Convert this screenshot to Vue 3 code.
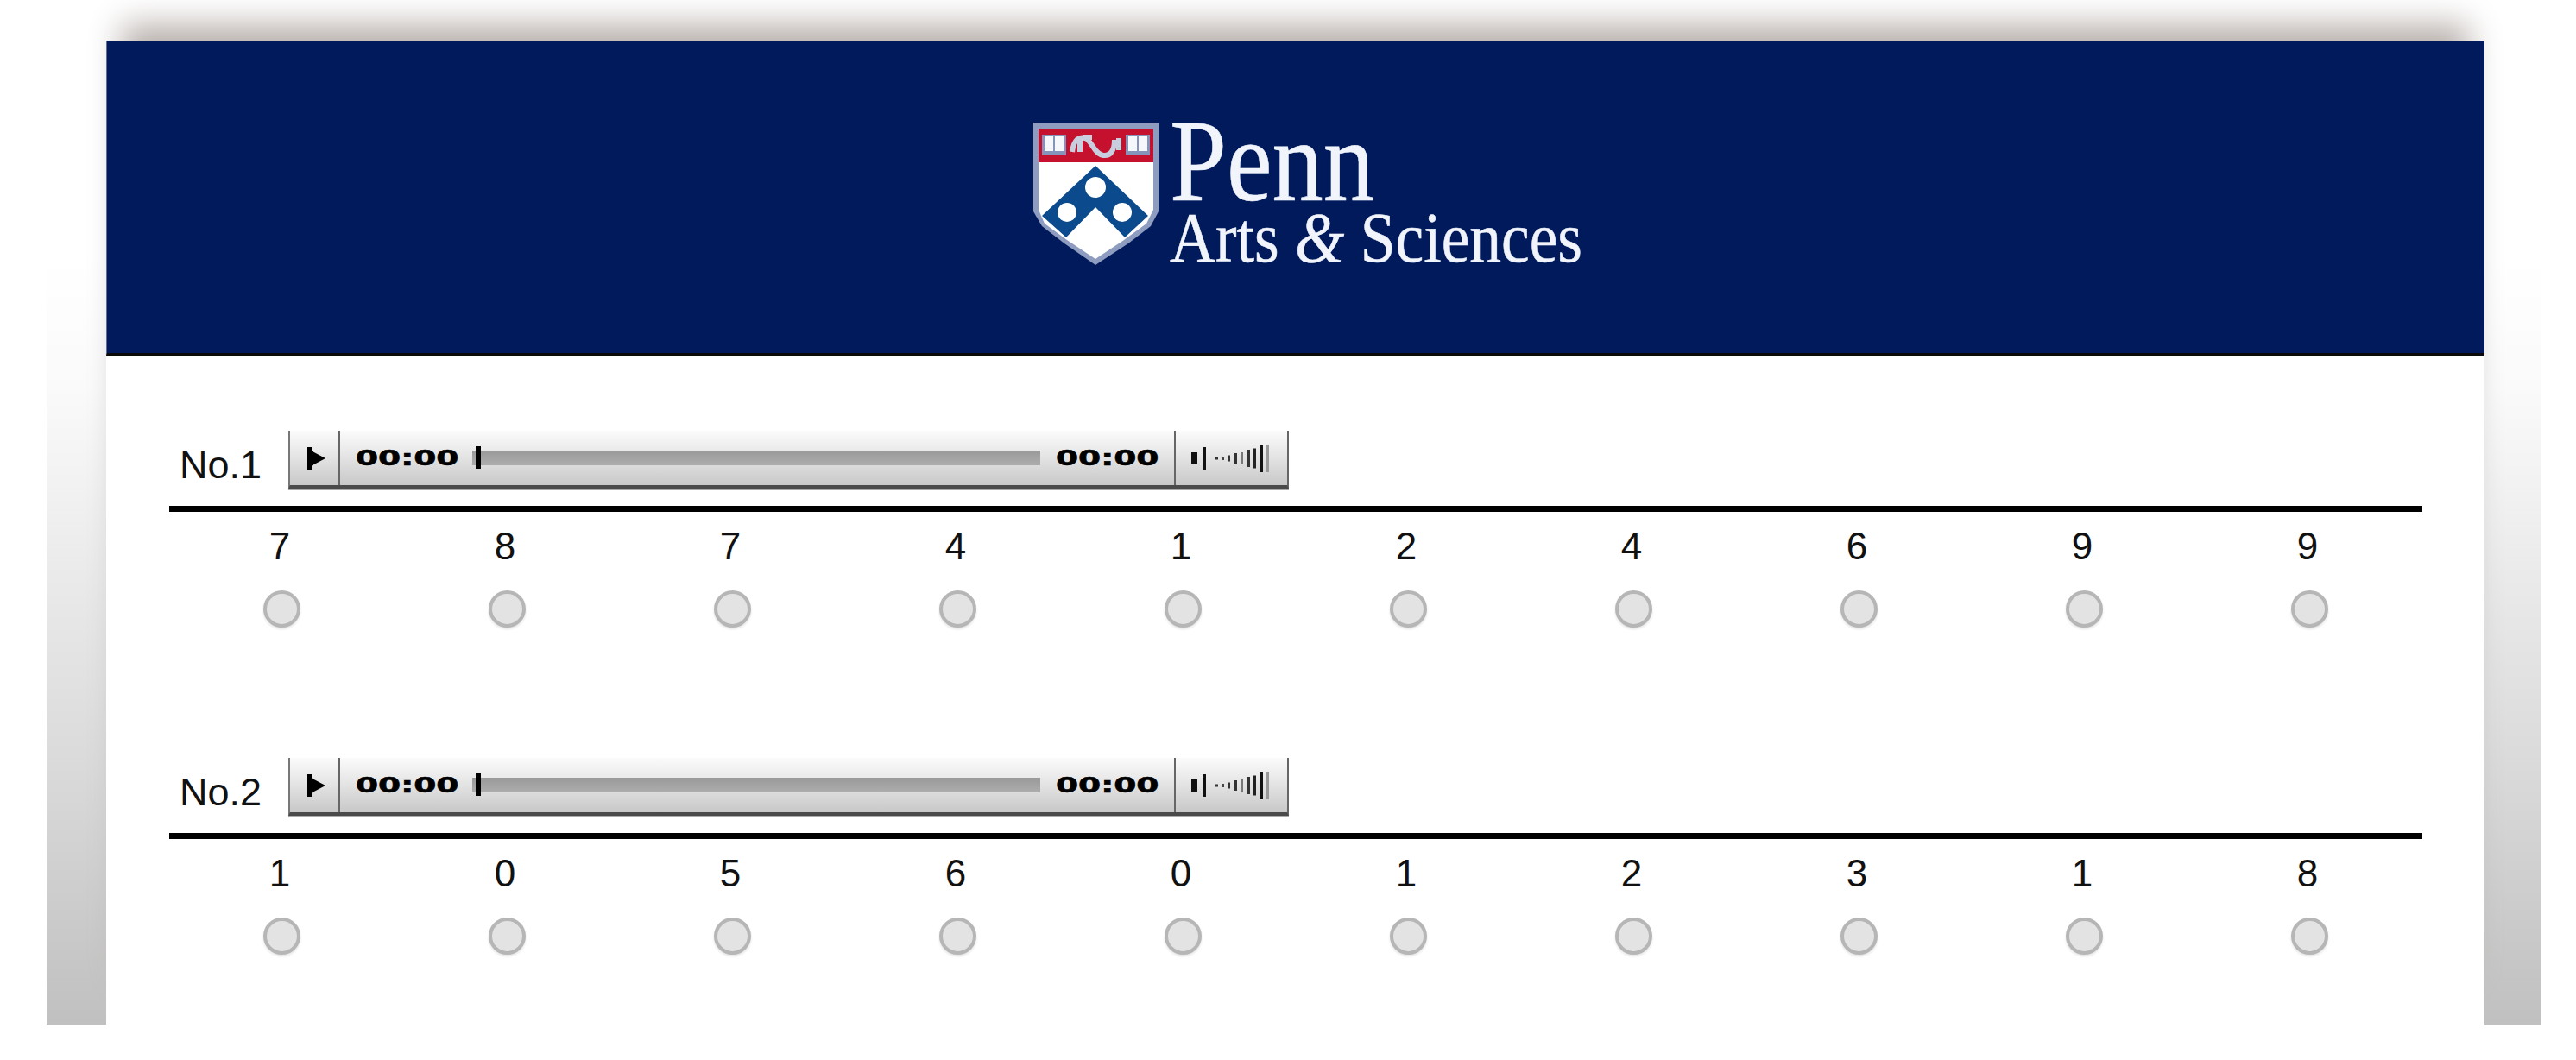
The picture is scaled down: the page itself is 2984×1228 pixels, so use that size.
<script setup>
const rows = [
  { label: 'No.1', digits: [7, 8, 7, 4, 1, 2, 4, 6, 9, 9] },
  { label: 'No.2', digits: [1, 0, 5, 6, 0, 1, 2, 3, 1, 8] }
]
const volumeBars = [
  { x: 1, h: 3, c: '#333' }, { x: 8, h: 4, c: '#444' }, { x: 15, h: 7, c: '#333' },
  { x: 23, h: 12, c: '#333' }, { x: 30, h: 14, c: '#777' }, { x: 38, h: 20, c: '#333' },
  { x: 45, h: 23, c: '#222' }, { x: 53, h: 32, c: '#111' }, { x: 60, h: 32, c: '#999' }
]
</script>

<template>
  <div class="page">
    <main class="card">
      <header class="banner">
        <svg class="logo" width="660" height="222" viewBox="0 -30 660 222">
          <path d="M2 2H147V105L138 122L112 142L74 167L38 142L12 122L2 105Z" fill="#8e9cc0" />
          <path d="M8 9H141V103L133 119L107 138L74 160L41 138L15 119L8 103Z" fill="#fff" />
          <rect x="8" y="9" width="133" height="39" fill="#c5112e" />
          <g>
            <rect x="12" y="16" width="28" height="24" fill="#8494ba" />
            <rect x="15" y="17" width="10" height="18" fill="#f6f7fb" />
            <rect x="27" y="17" width="10" height="18" fill="#f6f7fb" />
            <rect x="109" y="16" width="28" height="24" fill="#8494ba" />
            <rect x="112" y="17" width="10" height="18" fill="#f6f7fb" />
            <rect x="124" y="17" width="10" height="18" fill="#f6f7fb" />
          </g>
          <path d="M47 36C49 21 55 18 62 20C70 23 72 38 83 40C93 41 96 32 96 22M56 22V36M70 19H60M101 20V34" fill="none" stroke="#c9cede" stroke-width="6" />
          <polygon points="74,52 135,110 108,135 74,100 40,135 12,110" fill="#0b4a8c" />
          <circle cx="74" cy="77" r="12" fill="#fff" />
          <circle cx="41" cy="106" r="11" fill="#fff" />
          <circle cx="105" cy="106" r="11" fill="#fff" />
          <text class="word" x="160" y="92" font-size="135" textLength="237" lengthAdjust="spacingAndGlyphs">Penn</text>
          <text class="word" x="160" y="163" font-size="82" textLength="478" lengthAdjust="spacingAndGlyphs">Arts <tspan font-style="italic">&amp;</tspan> Sciences</text>
        </svg>
      </header>

      <section v-for="row in rows" :key="row.label" class="question">
        <div class="question-head">
          <span class="label">{{ row.label }}</span>
          <div class="player">
            <div class="play-cell">
              <svg width="22" height="26" viewBox="0 0 22 26">
                <rect x="0" y="0" width="5" height="26" fill="#000" />
                <polygon points="4,4 21,13 4,22" fill="#000" />
              </svg>
            </div>
            <div class="track-cell">
              <span class="time">00:00</span>
              <div class="track"><span class="knob"></span></div>
              <span class="time">00:00</span>
            </div>
            <div class="volume-cell">
              <svg width="100" height="34" viewBox="0 0 100 34">
                <rect x="0" y="10" width="7" height="14" fill="#111" />
                <rect x="13" y="4" width="4" height="26" fill="#111" />
                <g transform="translate(27 0)">
                  <rect v-for="bar in volumeBars" :key="bar.x" :x="bar.x" :y="17 - bar.h / 2" width="3" :height="bar.h" :fill="bar.c" />
                </g>
              </svg>
            </div>
          </div>
        </div>
        <div class="options">
          <label v-for="(digit, i) in row.digits" :key="i" class="option">
            <span class="digit">{{ digit }}</span>
            <input class="radio" type="radio" :name="row.label" />
          </label>
        </div>
      </section>
    </main>
  </div>
</template>

<style>
html, body { margin: 0; background: #fff; overflow: hidden; }
</style>

<style scoped>
.page {
  box-sizing: border-box;
  width: 2890px;
  height: 1187px;
  margin-left: 54px;
  padding: 47px 66px 0 69px;
  overflow: hidden;
  background: linear-gradient(180deg, #fff 0, #fff 300px, #fafafa 450px, #d9d9d9 900px, #c0c0c0 1187px);
}
.card {
  height: 1140px;
  background: #fff;
  box-shadow: 0 -37px 36px -18px #b8b0ac;
  font-family: "Liberation Sans", Arial, sans-serif;
  color: #111;
}
.banner {
  box-sizing: border-box;
  height: 365px;
  padding: 63px 0 0 48px;
  display: flex;
  justify-content: center;
  align-items: flex-start;
  overflow: hidden;
  background: #001a5b;
  border-bottom: 3px solid #0a0a0a;
  border-left: 1px solid #5f6f95;
}
.word {
  font-family: "Liberation Serif", "Times New Roman", serif;
  fill: #f1f4fa;
  stroke: #f1f4fa;
  stroke-width: 0.6px;
}
.question {
  box-sizing: border-box;
  height: 379px;
  margin: 0 72px 0 73px;
  padding-top: 87px;
}
.question-head {
  display: flex;
  align-items: flex-start;
  height: 87px;
  border-bottom: 7px solid #000;
}
.label {
  flex: none;
  width: 138px;
  padding: 15px 0 0 12px;
  box-sizing: border-box;
  font-size: 45px;
  line-height: 50px;
}
.player {
  flex: none;
  display: flex;
  width: 1155px;
  height: 63px;
  background: linear-gradient(180deg, #fbfbfb, #e8e8e8 40%, #c8c8c8);
  border-left: 2px solid #777;
  border-right: 2px solid #666;
  border-bottom: 4px solid #4a4a4a;
  box-shadow: 0 2px 0 #aaa;
}
.play-cell {
  flex: none;
  width: 58px;
  display: flex;
  align-items: center;
  padding-left: 20px;
  box-sizing: border-box;
  border-right: 2px solid #666;
}
.track-cell {
  flex: none;
  box-sizing: border-box;
  width: 968px;
  display: flex;
  align-items: center;
  padding: 0 20px 0 18px;
  gap: 18px;
  border-right: 2px solid #666;
}
.time {
  flex: none;
  display: block;
  width: 117px;
  font-family: "DejaVu Sans", sans-serif;
  font-weight: 700;
  font-size: 25px;
  line-height: 30px;
  color: #000;
  -webkit-text-stroke: 0.6px #000;
  transform: scaleX(1.5);
  transform-origin: left center;
}
.track {
  position: relative;
  flex: 1;
  height: 17px;
  background: linear-gradient(180deg, #999, #adadad);
}
.knob {
  position: absolute;
  left: 4px;
  top: -5px;
  width: 6px;
  height: 26px;
  background: #000;
}
.volume-cell {
  flex: 1;
  display: flex;
  align-items: center;
  padding-left: 18px;
}
.options {
  display: grid;
  grid-template-columns: repeat(10, 1fr);
}
.option {
  display: flex;
  flex-direction: column;
  align-items: center;
  padding-top: 15px;
}
.digit {
  font-size: 44px;
  line-height: 50px;
  padding-right: 5px;
}
.radio {
  appearance: none;
  box-sizing: border-box;
  width: 43px;
  height: 43px;
  margin: 26px 0 0;
  border-radius: 50%;
  background: #e3e3e3;
  border: 4px solid #b6b6b6;
  box-shadow: 0 2px 3px #e4e4e4;
}
</style>
